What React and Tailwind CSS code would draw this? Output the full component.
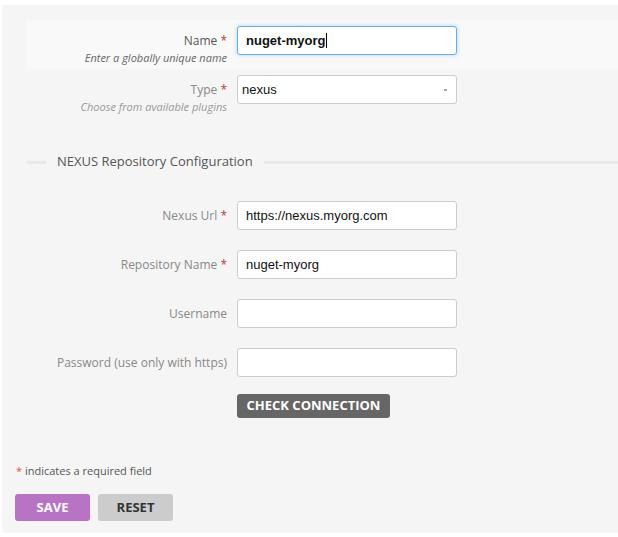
import { useState } from 'react'

const labelFont = { fontFamily: '"Open Sans", "Liberation Sans", sans-serif' }

function Req() {
  return <span className="text-[#a94442]"> *</span>
}

function Row({ label, required, help, dark, children, highlight }) {
  return (
    <div className={`flex h-[49px] pt-[6px] ${highlight ? 'bg-[#f9f9f9]' : ''}`}>
      <div className="w-[200px] shrink-0 text-right" style={labelFont}>
        <div
          className={`flex h-[29px] items-center justify-end text-[12px] leading-none ${dark ? 'text-[#555]' : 'text-[#888]'}`}
        >
          <span className="whitespace-pre">
            {label}
            {required && <Req />}
          </span>
        </div>
        {help && (
          <div className={`-mt-[4px] text-[11px] italic leading-[14px] ${dark ? 'text-[#666]' : 'text-[#999]'}`}>{help}</div>
        )}
      </div>
      <div className="ml-[10px] w-[220px]">{children}</div>
    </div>
  )
}

function TextInput({ value, focused, bold }) {
  return (
    <div
      className={`flex h-[29px] items-center rounded-[3px] border bg-white px-[8px] text-[13px] text-[#111] ${
        focused ? 'border-[#66afe9] shadow-[0_0_4px_rgba(102,175,233,0.5)]' : 'border-[#ccc]'
      } ${bold ? 'font-bold' : ''}`}
      style={{ fontFamily: '"Liberation Sans", Arial, sans-serif' }}
    >
      {value}
      {focused && <span className="ml-[1px] inline-block h-[15px] w-px bg-black" />}
    </div>
  )
}

export default function App() {
  const [type] = useState('nexus')

  return (
    <div className="h-[537px] w-[618px] overflow-hidden bg-white">
      <div className="ml-[2px] mt-[5px] h-[528px] rounded-bl-[4px] bg-[#f5f5f5] pt-[15px]">
        <div className="pl-[25px]">
          <Row label="Name" required help="Enter a globally unique name" dark highlight>
            <TextInput value="nuget-myorg" focused bold />
          </Row>
          <Row label="Type" required help="Choose from available plugins">
            <div
              className="relative flex h-[29px] items-center rounded-[3px] border border-[#ccc] bg-white px-[4px] text-[13px] text-[#111]"
              style={{ fontFamily: '"Liberation Sans", Arial, sans-serif' }}
            >
              {type}
              <span className="absolute right-[9px] top-[13px] h-[2px] w-[3px] bg-[#aaa]" />
            </div>
          </Row>
        </div>

        <div className="mt-[35px] flex h-[18px] items-center pl-[25px]" style={labelFont}>
          <div className="h-[3px] w-[19px] bg-[#e8e8e8]" />
          <span className="px-[11px] text-[13px] text-[#555]">NEXUS Repository Configuration</span>
          <div className="h-[3px] flex-1 bg-[#e8e8e8]" />
        </div>

        <div className="mt-[24px] pl-[25px]">
          <Row label="Nexus Url" required>
            <TextInput value="https://nexus.myorg.com" />
          </Row>
          <Row label="Repository Name" required>
            <TextInput value="nuget-myorg" />
          </Row>
          <Row label="Username">
            <TextInput value="" />
          </Row>
          <Row label="Password (use only with https)">
            <TextInput value="" />
          </Row>
          <div className="mt-[1px] pl-[210px]">
            <button
              className="h-[24px] w-[153px] rounded-[3px] bg-[#666] text-[13px] font-bold uppercase text-white"
              style={labelFont}
            >
              Check Connection
            </button>
          </div>
        </div>

        <div className="mt-[45px] pl-[14px] text-[11px] text-[#555]" style={labelFont}>
          <span className="text-[#d9534f]">*</span> indicates a required field
        </div>

        <div className="mt-[15px] flex gap-[8px] pl-[13px]" style={labelFont}>
          <button className="h-[27px] w-[75px] rounded-[3px] bg-[#b873c4] text-[13px] font-bold text-white">SAVE</button>
          <button className="h-[27px] w-[75px] rounded-[3px] bg-[#ccc] text-[13px] font-bold text-[#333]">RESET</button>
        </div>
      </div>
    </div>
  )
}
